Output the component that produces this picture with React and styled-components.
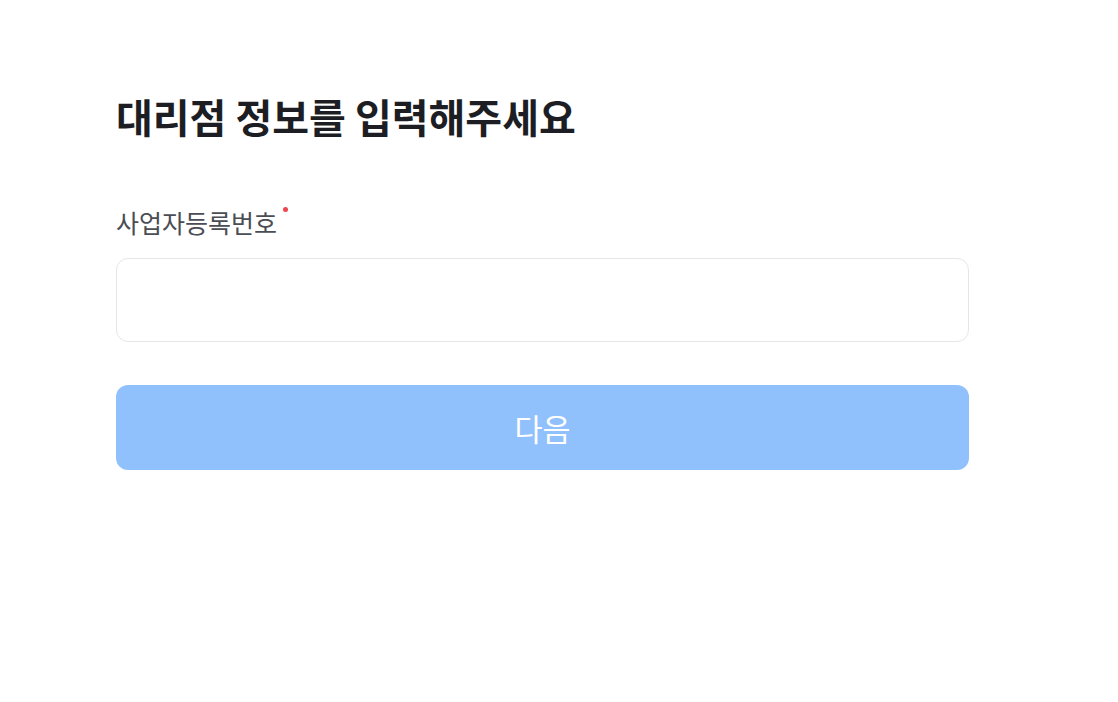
import styled, { createGlobalStyle } from "styled-components";

const GlobalStyle = createGlobalStyle`
  * {
    box-sizing: border-box;
  }

  body {
    margin: 0;
    background: #ffffff;
    font-family: "Noto Sans CJK KR", "Noto Sans", sans-serif;
  }
`;

function App() {
  return (
    <>
      <GlobalStyle />
      <PageWrapper>
        <FormWrapper>
          <Title>대리점 정보를 입력해주세요</Title>
          <FieldWrapper>
            <Label>
              사업자등록번호
              <RequiredDot />
            </Label>
            <Input type="text" />
          </FieldWrapper>
          <SubmitButton type="button" disabled>
            다음
          </SubmitButton>
        </FormWrapper>
      </PageWrapper>
    </>
  );
}

export default App;

const PageWrapper = styled.div`
  width: 100%;
  min-height: 702px;
  padding: 88px 0 0 116px;
`;

const FormWrapper = styled.div`
  display: flex;
  flex-direction: column;
  width: 853px;
`;

const Title = styled.h1`
  margin: 0 0 61px;
  font-size: 40px;
  line-height: 56px;
  font-weight: 700;
  color: #1c1e24;
`;

const FieldWrapper = styled.div`
  display: flex;
  flex-direction: column;
  gap: 19px;
  margin-bottom: 43px;
`;

const Label = styled.label`
  position: relative;
  align-self: flex-start;
  font-size: 25px;
  line-height: 34px;
  font-weight: 400;
  color: #4a4d53;
  padding-right: 12px;
`;

const RequiredDot = styled.span`
  position: absolute;
  top: 2px;
  right: 1px;
  width: 5px;
  height: 5px;
  border-radius: 50%;
  background: #f0454f;
`;

const Input = styled.input`
  height: 84px;
  border: 1.5px solid #e4e6ea;
  border-radius: 12px;
  padding: 0 24px;
  font-size: 22px;
  outline: none;
  font-family: inherit;
`;

const SubmitButton = styled.button`
  height: 85px;
  border: none;
  border-radius: 12px;
  background: #90c1fc;
  color: #ffffff;
  font-family: inherit;
  font-size: 30.5px;
  font-weight: 400;
  cursor: pointer;

  &:disabled {
    cursor: default;
  }
`;
